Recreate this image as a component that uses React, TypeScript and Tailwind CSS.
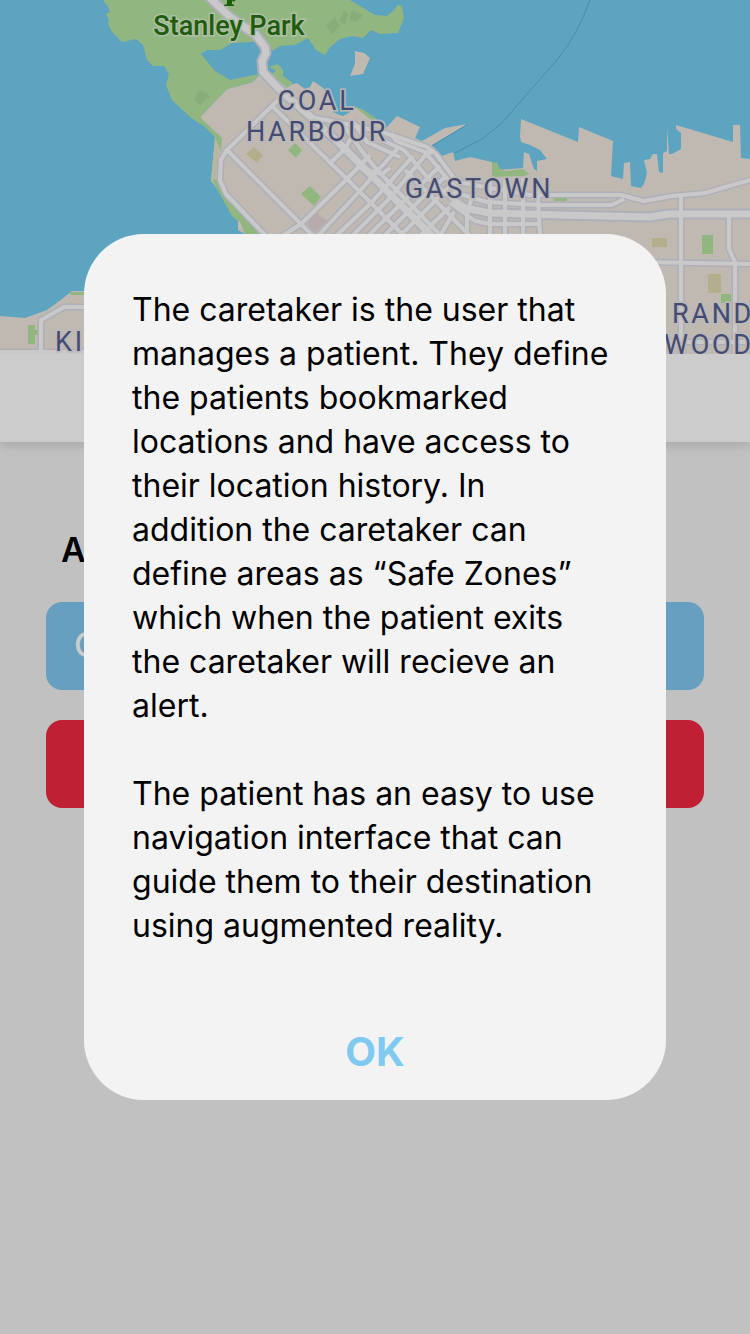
const land =
  'M200 117 L227 89 L253 82 L260 74 L290 85 L297 83 L305 89 L310 87 L313 81 L323 88 L334 99 L333 112 L343 116 L350 112 L357 107 L386 128 L397 116 L420 127 L415 138 L422 141 L445 128 L468 124 L432 145 L442 156 L453 152 L455 161 L470 157 L492 162 L498 170 L523 168 L524 152 L529 154 L534 169 L537 171 L537 161 L547 159 L540 150 L530 145 L521 142 L520 137 L521 119 L578 142 L579 127 L613 141 L611 176 L623 179 L624 163 L630 162 L631 186 L641 188 L644 184 L647 173 L644 160 L650 159 L653 154 L657 154 L659 172 L663 173 L663 153 L667 151 L667 128 L669 154 L672 154 L681 149 L681 133 L676 129 L676 125 L733 142 L733 125 L740 125 L741 158 L750 159 V354 H0 V316 L25 318 L47 310 L62 299 L72 291 H260 L245 234 L238 230 L238 221 L232 215 L222 195 L211 181 L215 137 Z';

const parks = [
  'M103 0 L107 5 L110 12 L106 14 L109 20 L108 24 L112 32 L122 42 L136 39 L143 45 L147 60 L153 66 L164 66 L169 74 L166 85 L172 100 L190 117 L205 127 L215 137 L221 152 L222 138 L200 117 L227 89 L253 82 L259 74 L230 80 L215 71 L201 54 L207 50 L220 50 L232 43 L253 42 L265 38 L272 51 L280 46 L295 45 L308 38 L316 50 L325 55 L330 47 L340 39 L352 36 L363 38 L371 30 L380 34 L398 33 L404 18 L402 6 L398 5 L393 11 L387 16 L375 15 L350 0 Z',
  'M269 67 L278 64 L283 70 L283 76 L293 83 L287 88 L271 74 L276 71 Z',
  'M212 180 L218 179 L222 190 L235 205 L262 234 L245 234 L240 222 L232 216 Z',
  'M355 107 L362 109 L387 126 L376 124 Z',
  'M492 163 L497 162 L499 168 L505 171 L523 169 L529 174 L524 176 L492 177 Z',
  'M295 143 L302 150 L296 158 L288 150 Z',
  'M310 186 L321 197 L314 206 L301 194 Z',
  'M702 235 H713 V254 H702 Z',
  'M721 294 H731 V303 H721 Z',
  'M28 325 H35 V330 H38 V335 H35 V344 H28 Z',
  'M70 292 H90 V295 H70 Z',
];

const woods = [
  'M200 90 L210 96 L200 105 L194 99 Z',
  'M335 17 L340 26 L332 34 L326 25 Z',
  'M344 10 L348 14 L345 25 L339 21 Z',
  'M352 10 L363 15 L357 22 L349 20 Z',
];

const plots = [
  'M254 147 L263 155 L257 163 L246 154 Z',
  'M652 238 H667 V247 H652 Z',
  'M708 274 H721 V293 H708 Z',
];

const avenues = [
  'M208 -4 L230 17 L256 35 L265 47 L266 53 L262 61 L263 72 L280 90 L311 117 L343 147 L432 236',
  'M453 200 L465 208 L490 213 L560 215 L650 217 L668 214 H750',
];

const streets = [
  'M278 100 L226 151 L221 160 L220 180 L226 194 L266 236',
  'M228 151 L317 240',
  'M271 105 L347 179 L405 237',
  'M311 117 L352 125 L385 133 L427 147 L432 154',
  'M345 127 L361 150 L378 171 L441 236',
  'M352 120 L367 142 L400 157',
  'M382 140 L404 150 L428 178 L464 209',
  'M391 133 L396 141 L425 152 L450 182 L460 190',
  'M405 170 L430 195 L470 236',
  'M360 168 L382 174 L390 168',
  'M276 240 L301 224 L347 179 L370 155',
  'M316 238 L358 193 L398 148',
  'M336 236 L372 202 L413 156',
  'M352 236 L388 200 L428 152',
  'M368 236 L405 200 L440 166',
  'M384 236 L420 200 L446 176',
  'M400 236 L430 206 L452 184',
  'M420 236 L450 207',
  'M440 236 L454 212',
  'M329 164 L345 149 L352 136',
  'M427 147 L436 154 L457 182 L530 195 H621 L644 201 L672 196 L705 193 L750 180',
  'M453 192 L487 202 L540 205 H612 L624 199',
  'M450 203 L475 221 L490 224 H540',
  'M490 182 V236',
  'M505 180 V236',
  'M523 178 V236',
  'M537 178 L540 236',
  'M474 190 L467 214 V236',
  'M681 195 V360',
  'M729 216 V249 L735 262 V360',
  'M640 262 L750 264',
  'M640 342 H750',
  'M41 358 V320 L64 307 H100',
  'M0 352 H100',
];

const labelClass =
  "fill-[#565e90] stroke-[#e9e6e6] stroke-[3px] [paint-order:stroke] font-['Roboto',sans-serif] text-[27px] tracking-widest";

function CityMap() {
  return (
    <svg
      className="block h-[354px] w-full bg-[#75cdf2]"
      viewBox="0 0 750 354"
      preserveAspectRatio="xMidYMin slice"
      role="img"
      aria-label="City map"
    >
      <path d={land} fill="#efe8df" />
      <path d="M355 38 L355 51 L364 53 L370 58 L363 74 L350 76 L355 64 Z" fill="#efe8df" />
      <path d="M215 137 L219 145 L216 180 L211 181 Z" fill="#e8e4c8" />
      <path d="M333 111 Q342 119 349 112 Z" fill="#75cdf2" />
      {parks.map((d) => <path key={d} d={d} fill="#b6e4a0" />)}
      {woods.map((d) => <path key={d} d={d} fill="#acd996" />)}
      {plots.map((d) => <path key={d} d={d} fill="#e1dab0" />)}
      <path d="M315 211 L327 221 L315 232 L307 224 Z" fill="#e6d6d6" />
      <path d="M590 0 Q578 34 557 60 L527 94 L502 123 L482 139 L455 153" fill="none" stroke="#60aedb" strokeWidth="1" />
      <path d="M468 124 L432 146" stroke="#60aedb" strokeWidth="1" />
      <g fill="none" strokeLinejoin="round">
        <g stroke="#dadbe7">
          {streets.map((d) => <path key={d} d={d} strokeWidth="7" />)}
          {avenues.map((d) => <path key={d} d={d} strokeWidth="11" />)}
        </g>
        <g stroke="#fcfcfd">
          {streets.map((d) => <path key={d} d={d} strokeWidth="4" />)}
          {avenues.map((d) => <path key={d} d={d} strokeWidth="7" />)}
        </g>
      </g>
      <path d="M554 198 H567 V201 H554 Z" fill="#b6e4a0" />
      <path d="M227 0 H232 V4 L234 5 V6 H224 V5 L227 4 Z M232 0 H236 L233 2 Z" fill="#28730c" />
      <text x="229" y="35" textAnchor="middle" className="fill-[#28730c] stroke-[#dcefd2] stroke-[3px] [paint-order:stroke] font-['Roboto',sans-serif] text-[27px] font-medium">
        Stanley Park
      </text>
      <text x="317" y="110" textAnchor="middle" className={labelClass}>COAL</text>
      <text x="317" y="141" textAnchor="middle" className={labelClass}>HARBOUR</text>
      <text x="479" y="198" textAnchor="middle" className={labelClass}>GASTOWN</text>
      <text x="672" y="323" className={labelClass}>RAND</text>
      <text x="664" y="354" className={labelClass}>WOOD</text>
      <text x="55" y="351" className={labelClass}>KI</text>
    </svg>
  );
}

export default function App() {
  return (
    <div className="min-h-screen bg-[#f2f2f2] font-['Inter','Liberation_Sans',sans-serif] text-black">
      <CityMap />
      <header className="h-[88px] bg-white shadow-[0_4px_10px_rgba(0,0,0,0.12)]" />
      <main className="px-[46px] pt-[86px]">
        <h1 className="mb-[30px] pl-[15px] text-[34px] leading-[44px] font-semibold">A</h1>
        <div className="flex flex-col gap-[30px]">
          <button type="button" className="h-[88px] rounded-2xl bg-[#80c7ef] px-7 pb-1 text-left text-[34px] font-medium text-white">
            C
          </button>
          <button type="button" aria-label="Cancel" className="h-[88px] rounded-2xl bg-[#f12840]" />
        </div>
      </main>

      <div className="fixed inset-0 flex items-center justify-center bg-black/20 px-[84px]">
        <div
          role="dialog"
          aria-modal="true"
          aria-label="About caretakers and patients"
          className="flex w-full max-w-[582px] flex-col items-center rounded-[60px] bg-[#f3f3f3] pt-[54px] pb-[26px]"
        >
          <div className="flex w-full flex-col gap-11 pr-14 pl-12 text-[32px] leading-[44px]">
            <p>
              The caretaker is the user that manages a patient. They define the patients bookmarked
              locations and have access to their location history. In addition the caretaker can
              define areas as “Safe Zones” which when the patient exits the caretaker will recieve
              an alert.
            </p>
            <p>
              The patient has an easy to use navigation interface that can guide them to their
              destination using augmented reality.
            </p>
          </div>
          <button type="button" className="mt-[82px] px-6 text-[40px] leading-[44px] font-bold text-[#80c9f0]">
            OK
          </button>
        </div>
      </div>
    </div>
  );
}
